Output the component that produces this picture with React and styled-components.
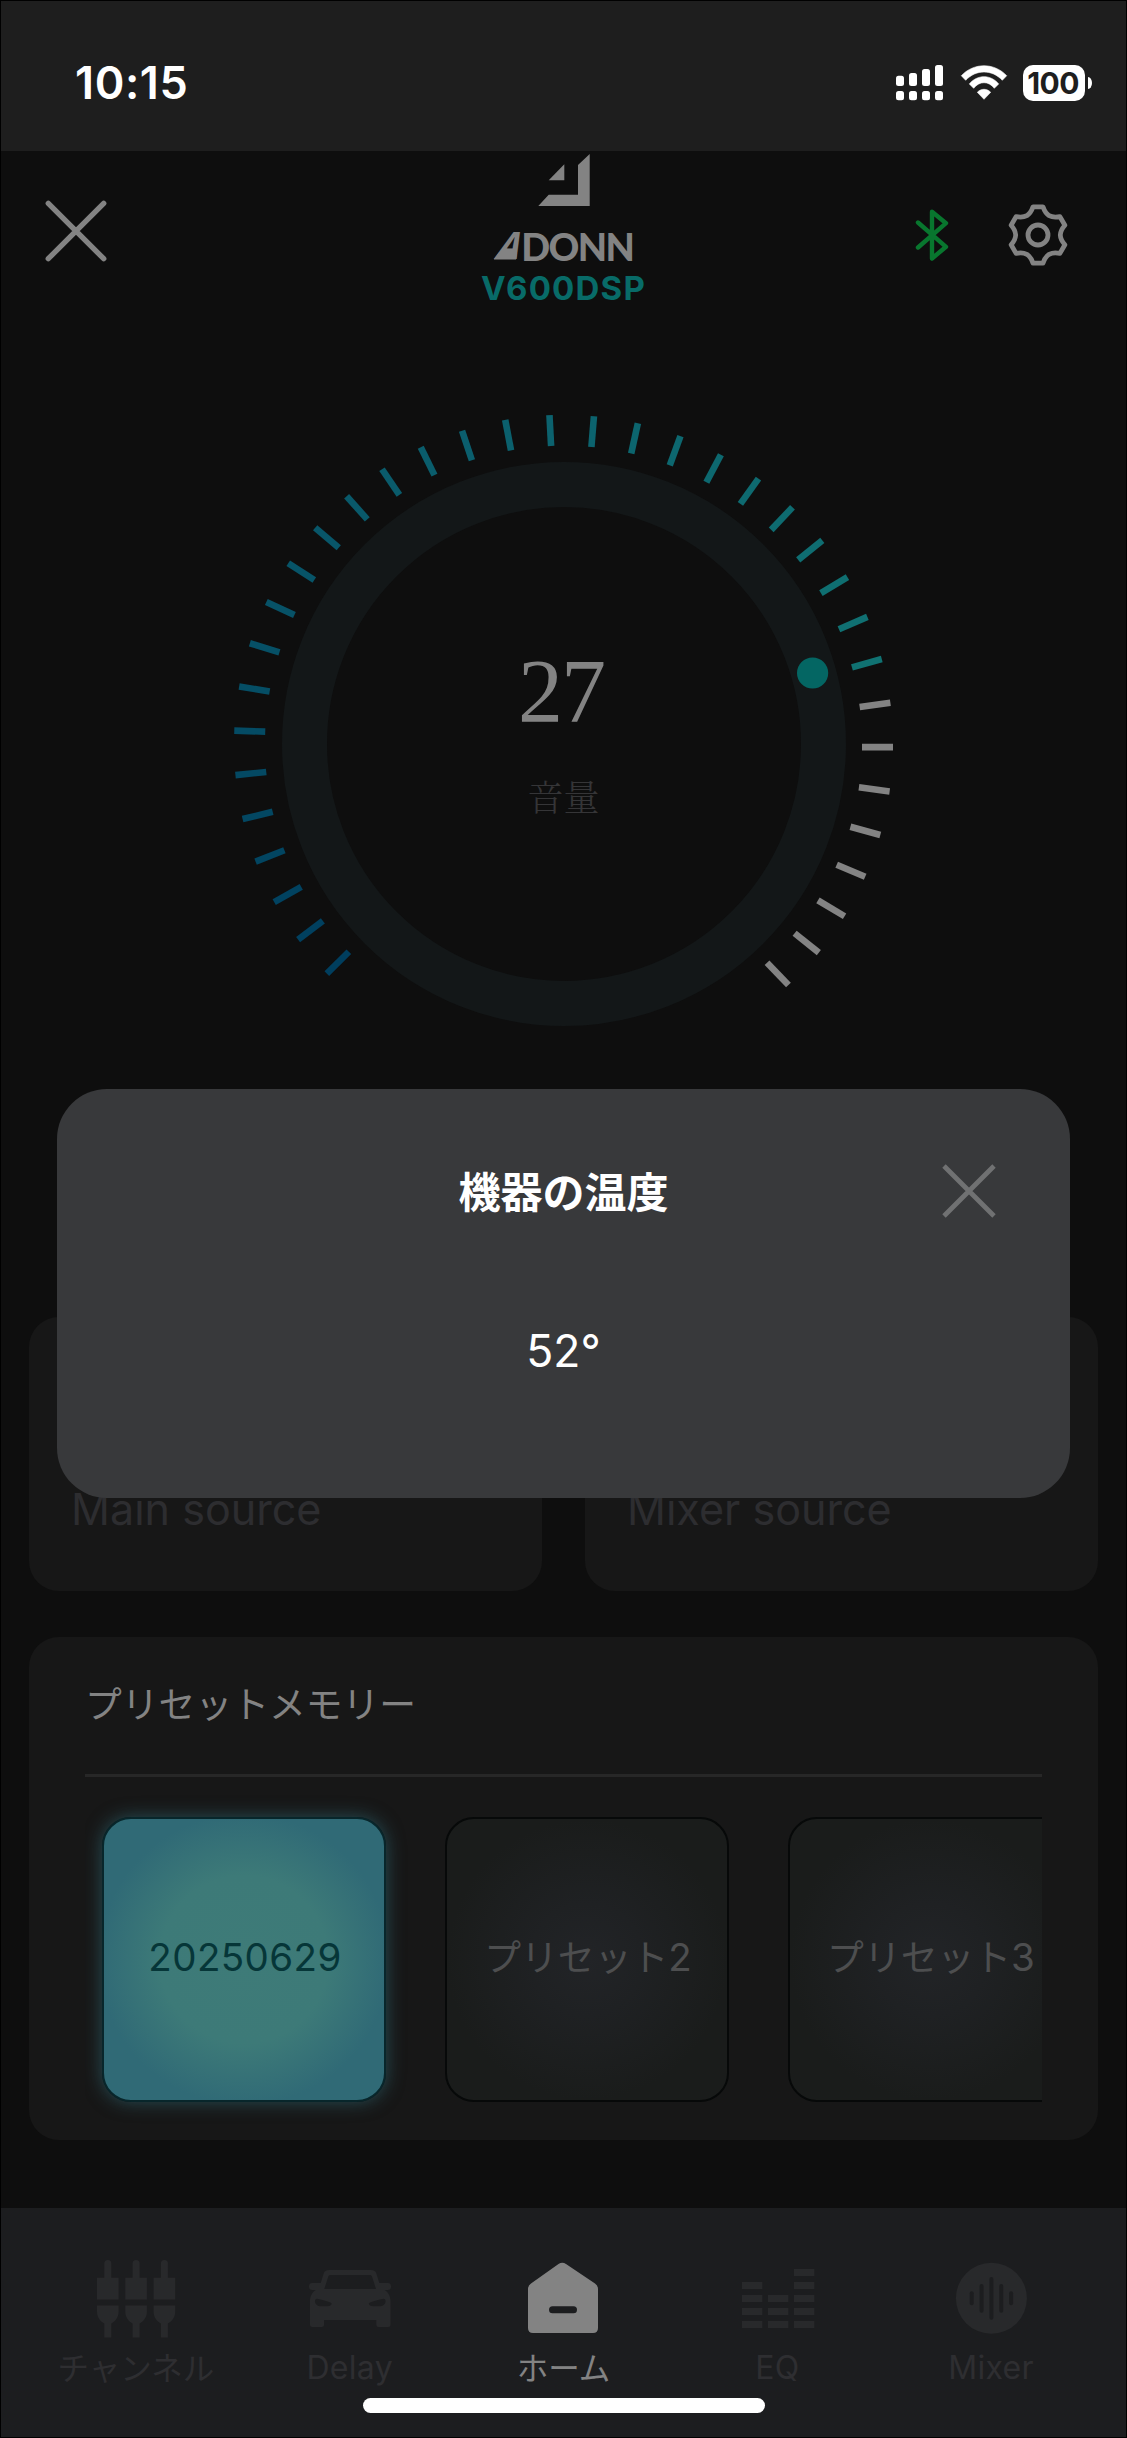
import React from "react";
import styled, { createGlobalStyle } from "styled-components";

const JP = `"Noto Sans CJK JP", sans-serif`;
const LATIN = `Inter, "Noto Sans CJK JP", sans-serif`;
const GREY = "#838383";

const GlobalStyle = createGlobalStyle`
  html, body { margin: 0; padding: 0; background: #000; }
  *, *::before, *::after { box-sizing: border-box; }
  svg { display: block; flex: none; }
`;

const Screen = styled.div`
  position: relative;
  display: flex;
  flex-direction: column;
  width: 1127px;
  height: 2438px;
  overflow: hidden;
  border: 1px solid #000;
  background: #0e0e0e;
  color: ${GREY};
  font-family: ${LATIN};
`;

/* ---------- status bar ---------- */

const StatusBar = styled.header`
  display: flex;
  align-items: center;
  justify-content: space-between;
  height: 150px;
  padding: 14px 34px 0 74px;
  background: #1e1e1e;
  color: #fff;
`;

const Time = styled.time`
  font-size: 45px;
  font-weight: 600;
  line-height: 50px;
  letter-spacing: 0.6px;
`;

const StatusIcons = styled.div`
  display: flex;
  align-items: center;
`;

const Battery = styled.div`
  display: flex;
  align-items: center;
  gap: 3px;
  margin-left: 15px;
`;

const BatteryBody = styled.div`
  width: 62px;
  height: 36px;
  padding-right: 2px;
  border-radius: 10px;
  background: #fff;
  color: #1e1e1e;
  font-size: 30px;
  font-weight: 700;
  line-height: 36px;
  letter-spacing: -0.6px;
  text-align: center;
`;

const BatteryNub = styled.div`
  width: 4px;
  height: 12px;
  border-radius: 0 4px 4px 0 / 0 6px 6px 0;
  background: #fff;
`;

/* ---------- app header ---------- */

const Header = styled.div`
  display: grid;
  grid-template-columns: 1fr auto 1fr;
  align-items: start;
  height: 170px;
  padding: 0 44px;
`;

const CloseButton = styled.div`
  margin-top: 49px;
`;

const Brand = styled.div`
  display: flex;
  flex-direction: column;
  align-items: center;
  padding-top: 3px;
`;

const Wordmark = styled.div`
  display: flex;
  margin-top: 20px;
  height: 40px;
  font-family: Lato, sans-serif;
  font-size: 38px;
  font-weight: 900;
  line-height: 40px;
  letter-spacing: -1.6px;
`;

const SlantedLetter = styled.span`
  position: relative;
  display: inline-block;
  font-family: Inter, sans-serif;
  font-size: 37px;
  font-weight: 700;
  letter-spacing: 0;
  transform: translateX(3px) skewX(-23.5deg) scaleX(0.88);

  &::after {
    content: "";
    position: absolute;
    left: 1px;
    right: 1px;
    bottom: 6.5px;
    height: 8px;
    background: ${GREY};
    clip-path: polygon(0 100%, 3px 0, calc(100% - 3px) 0, 100% 100%);
  }
`;

const Model = styled.div`
  margin-top: 2px;
  color: #086b68;
  font-size: 33px;
  font-weight: 700;
  line-height: 40px;
  letter-spacing: 1.2px;
`;

const HeaderActions = styled.div`
  display: flex;
  align-items: center;
  justify-content: flex-end;
  gap: 54px;
  margin: 52px 12px 0 0;
`;

/* ---------- volume dial ---------- */

const Dial = styled.section`
  display: grid;
  justify-content: center;
  margin-top: 83px;
  height: 680px;

  & > * { grid-area: 1 / 1; }
`;

const Readout = styled.div`
  display: flex;
  flex-direction: column;
  align-items: center;
  padding-top: 238px;
`;

const Volume = styled.div`
  margin-right: 5px;
  font-family: "Liberation Serif", serif;
  font-size: 90px;
  line-height: 100px;
  letter-spacing: -2px;
`;

const VolumeLabel = styled.div`
  margin-top: 29px;
  color: #353537;
  font-family: "Noto Serif CJK JP", ${JP};
  font-size: 36px;
  font-weight: 300;
  line-height: 50px;
`;

/* ---------- cards ---------- */

const Sources = styled.section`
  display: grid;
  grid-template-columns: 1fr 1fr;
  gap: 43px;
  margin: 233px 28px 0;
`;

const Card = styled.div`
  border-radius: 30px;
  background: #171717;
`;

const SourceCard = styled(Card)`
  display: flex;
  align-items: flex-end;
  height: 274px;
  padding: 0 42px 57px;
  color: #2d2d30;
  font-size: 43.1px;
  line-height: 50px;
`;

const Presets = styled(Card)`
  height: 503px;
  margin: 46px 28px 0;
  padding: 40px 56px 0;
`;

const PresetTitle = styled.h2`
  margin: 0;
  font-family: ${JP};
  font-size: 36.8px;
  font-weight: 400;
  line-height: 50px;
`;

const Divider = styled.div`
  height: 3px;
  margin-top: 47px;
  background: #272727;
`;

const PresetRow = styled.div`
  display: flex;
  gap: 59px;
  padding: 40px 0 36px 17px;
  overflow: hidden;
`;

const PresetTile = styled.div`
  flex: none;
  display: flex;
  align-items: center;
  justify-content: center;
  width: 284px;
  height: 285px;
  padding-bottom: ${(p) => (p.$active ? "6px" : "8px")};
  border: 2px solid ${(p) => (p.$active ? "#08262b" : "#070909")};
  border-radius: 29px;
  background: ${(p) =>
    p.$active
      ? "radial-gradient(circle closest-side, #3e7b78 0%, #3d7a78 60%, #306a76 104%)"
      : "radial-gradient(circle closest-side, #222427 0%, #1f2123 40%, #1a1c1b 100%)"};
  box-shadow: ${(p) => (p.$active ? "0 0 18px rgba(48, 106, 118, 0.65)" : "none")};
  color: ${(p) => (p.$active ? "#063638" : "#4d4e4f")};
  font-size: 38.5px;
  line-height: 50px;
  letter-spacing: ${(p) => (p.$active ? "0.4px" : "0")};
  white-space: nowrap;
`;

const PresetLabel = styled.span`
  margin-left: 2px;
`;

const Kana = styled.span`
  font-family: ${JP};
  font-size: 36.8px;
`;

/* ---------- tab bar ---------- */

const TabBar = styled.nav`
  position: relative;
  flex: 1;
  display: grid;
  grid-template-columns: repeat(5, 1fr);
  margin-top: 68px;
  padding: 50px 28px 0;
  background: #1c1d1f;
`;

const Tab = styled.div`
  display: flex;
  flex-direction: column;
  align-items: center;
  gap: ${(p) => (p.$kana ? "8px" : "10px")};
  color: ${(p) => (p.$active ? GREY : "#28292b")};
`;

const TabLabel = styled.span`
  color: ${(p) => (p.$active ? GREY : "#2e2e31")};
  font-family: ${(p) => (p.$kana ? JP : LATIN)};
  font-size: ${(p) => (p.$kana ? "31.5px" : "32px")};
  line-height: 40px;
  letter-spacing: ${(p) => (p.$kana ? "0" : "0.3px")};
`;

const HomeIndicator = styled.div`
  position: absolute;
  left: 50%;
  bottom: 24px;
  width: 402px;
  height: 15px;
  border-radius: 8px;
  background: #fff;
  transform: translateX(-50%);
`;

/* ---------- modal ---------- */

const Modal = styled.div`
  position: absolute;
  top: 1088px;
  left: 56px;
  width: 1013px;
  height: 409px;
  padding: 72px 71px 0;
  border-radius: 50px;
  background: #38393b;
  color: #fff;
`;

const ModalHead = styled.div`
  display: grid;
  grid-template-columns: 58px 1fr 58px;
  align-items: center;
  height: 60px;
`;

const ModalTitle = styled.h1`
  grid-column: 2;
  margin: -2px 0 0;
  font-family: ${JP};
  font-size: 42px;
  font-weight: 700;
  line-height: 60px;
  text-align: center;
`;

const Temperature = styled.div`
  margin-top: 100px;
  font-size: 44.5px;
  line-height: 60px;
  text-align: center;
`;

/* ---------- drawings ---------- */

const SignalIcon = () => (
  <svg width="47" height="36" viewBox="0 0 47 36" fill="currentColor">
    {[10.7, 8, 4, 0].map((y, i) => (
      <g key={i}>
        <rect x={i * 13} y={y} width="8" height={21 - y} rx="2.5" />
        <rect x={i * 13} y="26" width="8" height="9.3" rx="2.5" />
      </g>
    ))}
  </svg>
);

const WifiSvg = styled.svg`
  margin-left: 17px;
`;

const WifiIcon = () => (
  <WifiSvg
    width="48" height="36" viewBox="0 0 48 36" fill="currentColor"
    stroke="currentColor" strokeWidth="0.6" strokeLinejoin="round"
  >
    <path d="M1.3 10.7C14-2.6 34-2.6 46.7 10.7L42.3 15.3C32 4.2 16 4.2 5.7 15.3Z" />
    <path d="M9.3 18.9C17.5 9.3 30.5 9.3 38.7 18.9L34.3 23.3C29 15.8 19 15.8 13.7 23.3Z" />
    <path d="M17.3 27.3C21 23.3 27 23.3 30.7 27.3L24 34.3Z" />
  </WifiSvg>
);

const Cross = ({ size, width, color, cap = "round" }) => {
  const a = width / 2 + 0.6;
  const b = size - a;
  return (
    <svg width={size} height={size} viewBox={`0 0 ${size} ${size}`} stroke={color} strokeWidth={width} strokeLinecap={cap}>
      <path d={`M${a} ${a}L${b} ${b}M${b} ${a}L${a} ${b}`} />
    </svg>
  );
};

const LogoMark = () => (
  <svg width="52" height="52" viewBox="0 0 52 52" fill="currentColor">
    <path d="M26.3 10.3V26.3H10.7Z" />
    <path d="M51.7 0V52H0.3L10.7 40.7H40V11Z" />
  </svg>
);

const BluetoothIcon = () => (
  <svg
    width="40" height="56" viewBox="0 0 40 56" fill="none" stroke="#08762e"
    strokeWidth="4.4" strokeLinecap="round" strokeLinejoin="round"
  >
    <path d="M6 15.5L34 39.8L20 51.5V4.8L34 16.2L6 40.5" />
  </svg>
);

const polar = (r, deg) => {
  const t = (deg * Math.PI) / 180;
  return `${(r * Math.cos(t)).toFixed(2)} ${(r * Math.sin(t)).toFixed(2)}`;
};

const gearPath =
  [0, 1, 2, 3, 4, 5]
    .map((i) => {
      const a = -90 + i * 60;
      return `${i ? "L" : "M"}${polar(28.6, a - 10)}L${polar(28.6, a + 10)}Q${polar(23, a + 18)} ${polar(22.3, a + 30)}Q${polar(23, a + 42)} ${polar(28.6, a + 50)}`;
    })
    .join("") + "Z";

const GearIcon = () => (
  <svg width="64" height="64" viewBox="-32 -32 64 64" fill="none" stroke={GREY} strokeWidth="4.8" strokeLinejoin="round">
    <path d={gearPath} />
    <circle r="10" />
  </svg>
);

const TICKS = 36;
const LIT = 28;

const mix = (t) => {
  const stops = [[0, 62, 94], [10, 92, 108], [16, 114, 114]];
  const k = t < 0.5 ? 0 : 1;
  const f = t * 2 - k;
  return `rgb(${stops[k].map((v, i) => Math.round(v + (stops[k + 1][i] - v) * f)).join(",")})`;
};

const DialFace = () => (
  <svg width="680" height="680" viewBox="-340 -340 680 680">
    <circle r="259.5" fill="none" stroke="#131718" strokeWidth="45" />
    <g transform="translate(-0.5 0.3)">
      {Array.from({ length: TICKS }, (_, i) => (
        <rect
          key={i} x="298.5" y="0.2" width="31" height="6.6"
          fill={i < LIT ? mix(i / (LIT - 1)) : GREY}
          transform={`rotate(${135.3 + i * 7.744})`}
        />
      ))}
    </g>
    <circle cx="248.6" cy="-71" r="15.6" fill="#046663" />
  </svg>
);

const ChannelIcon = () => (
  <svg width="90" height="80" viewBox="0 0 90 80" fill="currentColor">
    {[6, 34.3, 62.6].map((x) => (
      <path
        key={x}
        transform={`translate(${x} 0.5)`}
        d="M7.3 19.3V5a3.5 3.5 0 0 1 7 0V19.3H21.6V41H0V19.3ZM0 47H21.6V53C21.6 59 18.5 62.5 14.3 65V79H7.3V65C3.1 62.5 0 59 0 53Z"
      />
    ))}
  </svg>
);

const CarIcon = () => (
  <svg width="90" height="80" viewBox="0 0 90 80" fill="currentColor" fillRule="evenodd">
    <path d="M24 12H66C69 12 70.5 13 71.5 16L74.3 25H83Q86 25 86 28.5Q86 32 82.5 32H79.5C83 34 85.5 38 85.5 43V66.5Q85.5 69 83 69H73.5Q71.3 69 71.3 66.5V62H19V66.5Q19 69 16.5 69H7.5Q5 69 5 66.5V43C5 38 7.5 34 10.8 32H7.5Q4 32 4 28.5Q4 25 7 25H15.7L18.5 16C19.5 13 21 12 24 12ZM25 17Q23.8 17 23.3 18.5L19.3 31H71L67 18.5Q66.5 17 65.3 17ZM12 40.7C17 41.5 22 43 25.5 44.5Q27.5 45.5 26 47Q25 48.3 22 48.3H16C12 48.3 9.5 45.5 10 42.5Q10.3 40.5 12 40.7ZM78.5 40.7C73.5 41.5 68.5 43 65 44.5Q63 45.5 64.5 47Q65.5 48.3 68.5 48.3H74.5C78.5 48.3 81 45.5 80.5 42.5Q80.2 40.5 78.5 40.7Z" />
  </svg>
);

const HomeIcon = () => (
  <svg width="90" height="80" viewBox="0 0 90 80">
    <g transform="translate(0.5 0)">
      <path
        fill="currentColor"
        d="M40 6Q43.7 3.4 47.5 6L76.5 25.5Q79.5 27.5 79.5 31V70Q79.5 75 74.5 75H14.5Q9.5 75 9.5 70V31Q9.5 27.5 12.5 25.5Z"
      />
      <rect x="30.5" y="48.3" width="28" height="7" rx="3.5" fill="#1c1d1f" />
    </g>
  </svg>
);

const EqIcon = () => (
  <svg width="90" height="80" viewBox="0 0 90 80" fill="currentColor">
    {[4, 3, 5].map((count, col) =>
      Array.from({ length: count }, (_, n) => (
        <rect key={`${col}-${n}`} x={10 + col * 26} y={63 - n * 13} width="20.3" height="7" />
      ))
    )}
  </svg>
);

const MixerIcon = () => (
  <svg width="90" height="80" viewBox="0 0 90 80">
    <circle cx="45.4" cy="40.3" r="35.5" fill="currentColor" />
    {[14, 28.7, 42.7, 28.7, 14].map((h, i) => (
      <rect key={i} x={23.7 + i * 9.85} y={40.3 - h / 2} width="4" height={h} rx="2" fill="#1c1d1f" />
    ))}
  </svg>
);

const TABS = [
  { label: "チャンネル", Icon: ChannelIcon, kana: true },
  { label: "Delay", Icon: CarIcon },
  { label: "ホーム", Icon: HomeIcon, kana: true, active: true },
  { label: "EQ", Icon: EqIcon },
  { label: "Mixer", Icon: MixerIcon },
];

export default function App() {
  return (
    <>
      <GlobalStyle />
      <Screen>
        <StatusBar>
          <Time>10:15</Time>
          <StatusIcons>
            <SignalIcon />
            <WifiIcon />
            <Battery>
              <BatteryBody>100</BatteryBody>
              <BatteryNub />
            </Battery>
          </StatusIcons>
        </StatusBar>

        <Header>
          <CloseButton>
            <Cross size={62} width={5.4} color={GREY} />
          </CloseButton>
          <Brand>
            <LogoMark />
            <Wordmark>
              <SlantedLetter>A</SlantedLetter>DONN
            </Wordmark>
            <Model>V600DSP</Model>
          </Brand>
          <HeaderActions>
            <BluetoothIcon />
            <GearIcon />
          </HeaderActions>
        </Header>

        <Dial>
          <DialFace />
          <Readout>
            <Volume>27</Volume>
            <VolumeLabel>音量</VolumeLabel>
          </Readout>
        </Dial>

        <Sources>
          <SourceCard>Main source</SourceCard>
          <SourceCard>Mixer source</SourceCard>
        </Sources>

        <Presets>
          <PresetTitle>プリセットメモリー</PresetTitle>
          <Divider />
          <PresetRow>
            <PresetTile $active><PresetLabel>20250629</PresetLabel></PresetTile>
            <PresetTile><PresetLabel><Kana>プリセット</Kana>2</PresetLabel></PresetTile>
            <PresetTile><PresetLabel><Kana>プリセット</Kana>3</PresetLabel></PresetTile>
          </PresetRow>
        </Presets>

        <TabBar>
          {TABS.map(({ label, Icon, kana, active }) => (
            <Tab key={label} $kana={kana} $active={active}>
              <Icon />
              <TabLabel $kana={kana} $active={active}>{label}</TabLabel>
            </Tab>
          ))}
          <HomeIndicator />
        </TabBar>

        <Modal>
          <ModalHead>
            <ModalTitle>機器の温度</ModalTitle>
            <Cross size={56} width={4.8} color="#707172" cap="butt" />
          </ModalHead>
          <Temperature>52°</Temperature>
        </Modal>
      </Screen>
    </>
  );
}
